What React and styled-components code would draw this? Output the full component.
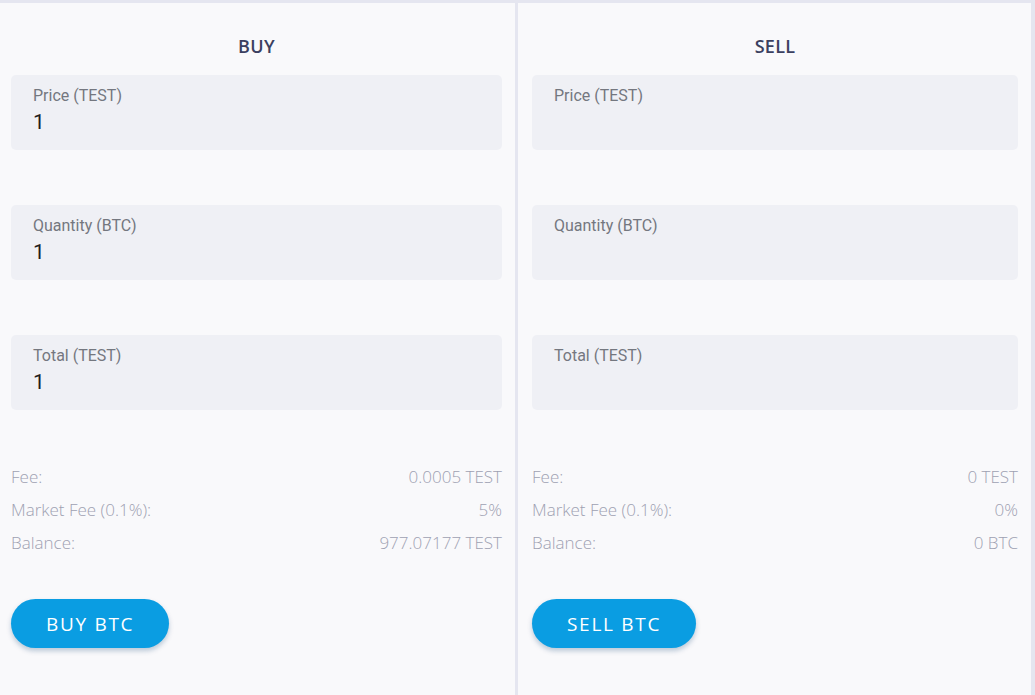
import React from "react";
import styled, { createGlobalStyle } from "styled-components";

const GlobalStyle = createGlobalStyle`
  body {
    margin: 0;
    background: #f9f9fb;
  }
`;

const Wrapper = styled.div`
  display: flex;
  height: 695px;
  box-sizing: border-box;
  border-top: 3px solid #e5e6f0;
  border-right: 4px solid #e5e6f0;
  background: #f9f9fb;
`;

const Panel = styled.div`
  width: ${(p) => p.width || "auto"};
  flex: ${(p) => (p.width ? "none" : "1")};
  box-sizing: border-box;
  padding: 0 13px 0 ${(p) => p.padLeft}px;
  display: flex;
  flex-direction: column;
`;

const Divider = styled.div`
  width: 3px;
  background: #e5e6f0;
`;

const Title = styled.h2`
  margin: 0;
  height: 72px;
  line-height: 86px;
  text-align: center;
  font-family: "Open Sans", sans-serif;
  font-size: 18px;
  font-weight: 600;
  color: #3b4060;
  letter-spacing: 0.3px;
`;

const Field = styled.div`
  height: 75px;
  box-sizing: border-box;
  background: #eff0f5;
  border-radius: 5px;
  padding: 12px 22px 0;
  margin-bottom: 55px;
  font-family: Roboto, sans-serif;
`;

const Label = styled.div`
  font-size: 16px;
  color: #74777f;
  line-height: 18px;
`;

const Value = styled.div`
  font-size: 21px;
  color: #1d1d22;
  line-height: 24px;
  margin-top: 5px;
`;

const Info = styled.div`
  margin-top: -5px;
  display: flex;
  flex-direction: column;
`;

const Row = styled.div`
  display: flex;
  justify-content: space-between;
  height: 33px;
  line-height: 33px;
  font-family: "Open Sans", sans-serif;
  font-size: 17px;
  font-weight: 300;
  color: #9ea1b2;
`;

const Button = styled.button`
  align-self: flex-start;
  margin-top: 40px;
  height: 49px;
  padding: 0 35px;
  border: none;
  border-radius: 25px;
  background: #0a9de2;
  color: #fff;
  font-family: "Open Sans", sans-serif;
  font-size: 19px;
  font-weight: 500;
  letter-spacing: 1.7px;
  box-shadow: 0 3px 5px rgba(0, 60, 110, 0.25);
  cursor: pointer;
`;

function TradeForm({ title, values, fee, marketFee, balance, action, width, padLeft }) {
  const fields = ["Price (TEST)", "Quantity (BTC)", "Total (TEST)"];
  return (
    <Panel width={width} padLeft={padLeft}>
      <Title>{title}</Title>
      {fields.map((f, i) => (
        <Field key={f}>
          <Label>{f}</Label>
          {values[i] && <Value>{values[i]}</Value>}
        </Field>
      ))}
      <Info>
        <Row><span>Fee:</span><span>{fee}</span></Row>
        <Row><span>Market Fee (0.1%):</span><span>{marketFee}</span></Row>
        <Row><span>Balance:</span><span>{balance}</span></Row>
      </Info>
      <Button>{action}</Button>
    </Panel>
  );
}

export default function App() {
  return (
    <>
      <GlobalStyle />
      <Wrapper>
        <TradeForm
          title="BUY"
          values={["1", "1", "1"]}
          fee="0.0005 TEST"
          marketFee="5%"
          balance="977.07177 TEST"
          action="BUY BTC"
          width="515px"
          padLeft={11}
        />
        <Divider />
        <TradeForm
          title="SELL"
          values={[]}
          fee="0 TEST"
          marketFee="0%"
          balance="0 BTC"
          action="SELL BTC"
          padLeft={14}
        />
      </Wrapper>
    </>
  );
}
